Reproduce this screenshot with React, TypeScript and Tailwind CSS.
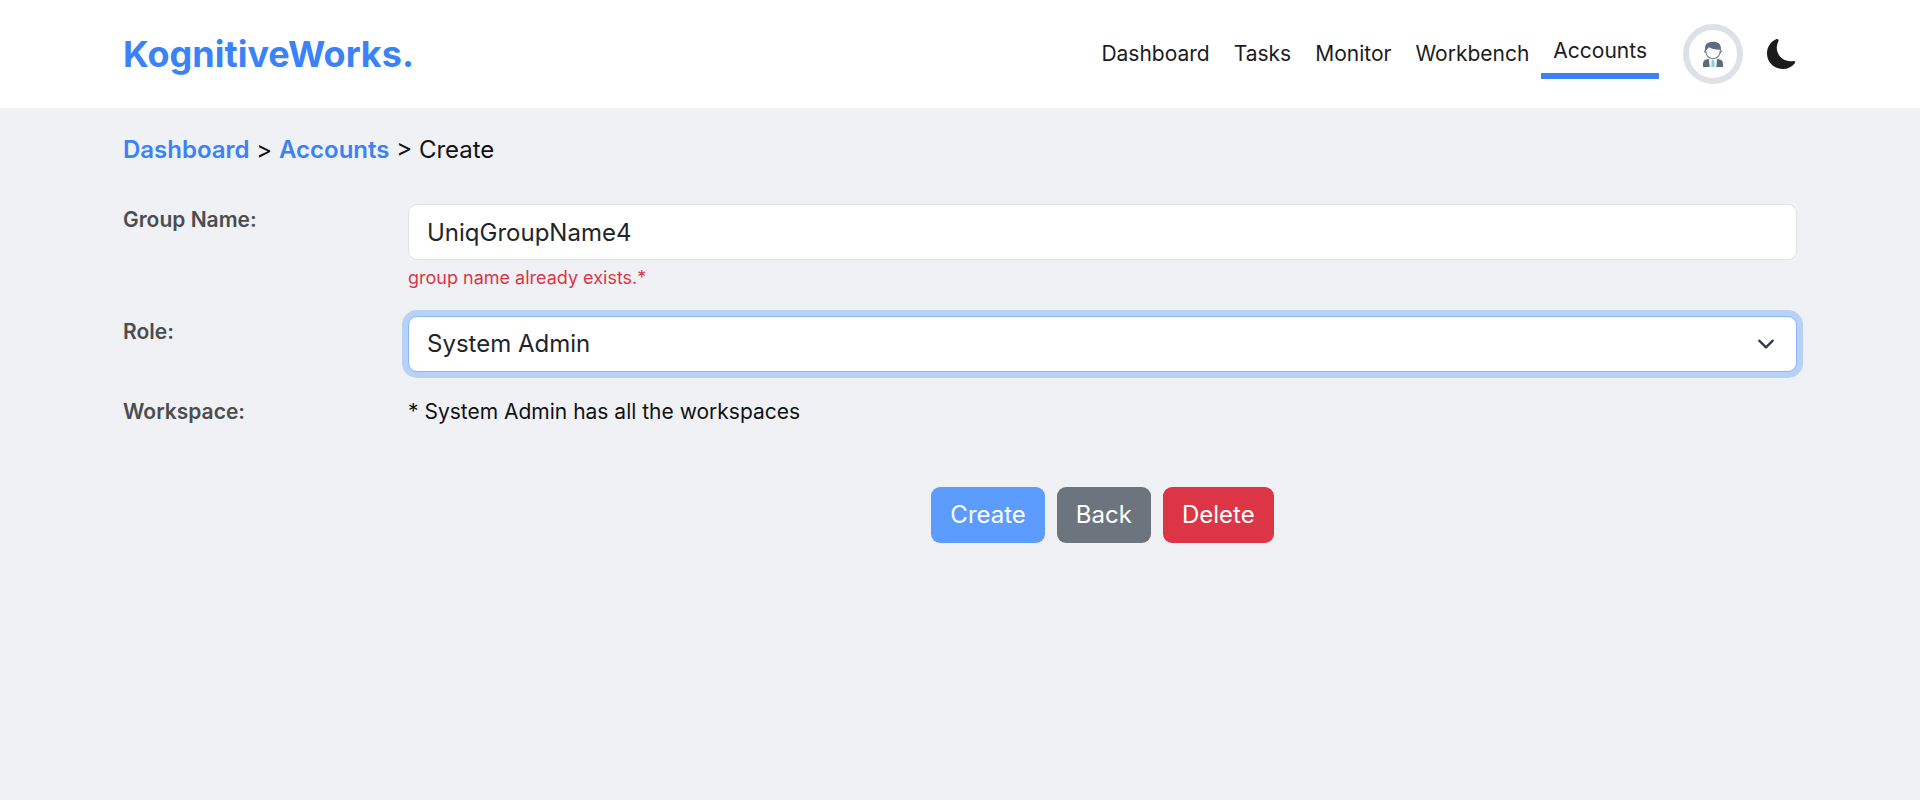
import { useState } from "react";
import { BsMoonFill } from "react-icons/bs";

const navItems = ["Dashboard", "Tasks", "Monitor", "Workbench", "Accounts"];
const labelClass = "text-[21px] leading-[31px] font-semibold text-[#4b4d4f]";
const buttonClass = "h-14 rounded-[9px] px-[19px] text-2xl text-white";

function Avatar() {
  return (
    <svg viewBox="0 0 30 34" className="h-[34px] w-[30px]" aria-hidden="true">
      <path d="M5 30v-3q0-3.600 3.200-4.500l3.300-1h7l3.300 1q3.200.9 3.200 4.500v3z" fill="#5a6d80" />
      <path d="M10.800 21.500h8.400L18.300 30h-6.600z" fill="#f6f9fa" />
      <path d="M13.800 22.800h2.400l.6 7.200h-3.600z" fill="#93d3c6" />
      <ellipse cx="15" cy="14.500" rx="9" ry="2.300" fill="#5a6d80" />
      <ellipse cx="15" cy="14.500" rx="8.200" ry="1.400" fill="#fff" />
      <path d="M7.300 13.500C6 7.500 9.500 4.800 15.500 4.800c6 0 8.200 3.500 7.200 8.700q0 7.800-7.700 8.500-7.700-.7-7.700-8.500z" fill="#5a6d80" />
      <path d="M8.100 13.500 10.800 10.200q5 3 11 2.300v1q-.2 7-6.800 7.800-6.600-.8-6.900-7.800z" fill="#fff" />
    </svg>
  );
}

export default function App() {
  const [name, setName] = useState("UniqGroupName4");
  const [role, setRole] = useState("System Admin");

  return (
    <div className="min-h-screen bg-[#f0f1f5] font-['Inter',sans-serif] text-[#111]">
      <header className="bg-white">
        <div className="mx-auto flex h-[108px] w-full max-w-[1722px] items-center justify-between px-6">
          <a href="#" className="text-4xl font-bold text-[#3b82f6]">
            KognitiveWorks.
          </a>
          <div className="flex items-center gap-6">
            <nav className="flex items-center text-[21px] leading-8 text-[#1c1c1c]">
              {navItems.map((item) => (
                <a
                  key={item}
                  href="#"
                  className={
                    item === "Accounts"
                      ? "border-b-6 border-[#3b82f6] px-3 py-1.5"
                      : "px-3 py-1.5"
                  }
                >
                  {item}
                </a>
              ))}
            </nav>
            <button
              type="button"
              aria-label="Profile"
              className="flex size-[60px] items-center justify-center rounded-full border-6 border-[#dee2e6] bg-white"
            >
              <Avatar />
            </button>
            <button type="button" aria-label="Dark mode" className="text-[#1c1c1c]">
              <BsMoonFill className="size-[30px]" />
            </button>
          </div>
        </div>
      </header>

      <main className="mx-auto w-full max-w-[1722px] px-6 pt-6">
        <nav aria-label="Breadcrumb" className="text-2xl leading-9">
          <a href="#" className="font-semibold text-[#3b82f6]">
            Dashboard
          </a>
          {" > "}
          <a href="#" className="font-semibold text-[#3b82f6]">
            Accounts
          </a>
          {" > "}
          Create
        </nav>

        <form className="mt-9 flex flex-col gap-6" onSubmit={(e) => e.preventDefault()}>
          <div className="grid grid-cols-6 gap-x-9">
            <label htmlFor="group-name" className={labelClass}>
              Group Name:
            </label>
            <div className="col-span-5">
              <input
                id="group-name"
                value={name}
                onChange={(e) => setName(e.target.value)}
                className="block h-14 w-full rounded-[9px] border border-[#dee2e6] bg-white px-[18px] text-2xl text-[#212529]"
              />
              <p className="mt-1 text-lg leading-7 text-[#dc3545]">group name already exists.*</p>
            </div>
          </div>

          <div className="grid grid-cols-6 gap-x-9">
            <label htmlFor="role" className={labelClass}>
              Role:
            </label>
            <div className="relative col-span-5">
              <select
                id="role"
                value={role}
                onChange={(e) => setRole(e.target.value)}
                className="block h-14 w-full appearance-none rounded-[9px] border border-[#86b7fe] bg-white pr-14 pl-[18px] text-2xl text-[#212529] ring-6 ring-[#b7d1f7] outline-none"
              >
                <option>System Admin</option>
              </select>
              <svg
                viewBox="0 0 16 16"
                className="pointer-events-none absolute inset-y-0 right-[19px] my-auto h-[18px] w-6"
                fill="none"
                stroke="#343a40"
                strokeWidth="2"
                strokeLinecap="round"
                strokeLinejoin="round"
                aria-hidden="true"
              >
                <path d="m2 5 6 6 6-6" />
              </svg>
            </div>
          </div>

          <div className="grid grid-cols-6 gap-x-9">
            <span className={labelClass}>Workspace:</span>
            <p className="col-span-5 text-[21px] leading-[31px]">* System Admin has all the workspaces</p>
          </div>

          <div className="mt-9 grid grid-cols-6 gap-x-9">
            <div className="col-span-5 col-start-2 flex justify-center gap-3">
              <button type="submit" className={`${buttonClass} bg-[#5c9cff]`}>
                Create
              </button>
              <button type="button" className={`${buttonClass} bg-[#6c757d]`}>
                Back
              </button>
              <button type="button" className={`${buttonClass} bg-[#dc3545]`}>
                Delete
              </button>
            </div>
          </div>
        </form>
      </main>
    </div>
  );
}
